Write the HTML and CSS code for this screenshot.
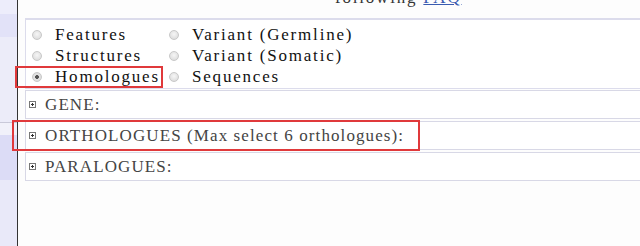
FILE: index.html
```html
<!DOCTYPE html>
<html lang="en">
<head>
    <meta charset="UTF-8">
    <title>Homologues</title>
    <link rel="stylesheet" href="styles.css">
</head>
<body>
    <div class="side"></div>

    <div class="main">
        <!-- top line, mostly scrolled out of view -->
        <div class="intro">
            <p>following <a href="#">FAQ</a></p>
        </div>

        <!-- data type choice -->
        <div class="panel">
            <label class="choice"><input type="radio" name="kind"> Features</label>
            <label class="choice"><input type="radio" name="kind"> Variant (Germline)</label>
            <label class="choice"><input type="radio" name="kind"> Structures</label>
            <label class="choice"><input type="radio" name="kind"> Variant (Somatic)</label>
            <label class="choice marked"><input type="radio" name="kind" checked> Homologues</label>
            <label class="choice"><input type="radio" name="kind"> Sequences</label>
        </div>

        <div class="section">
            <span class="toggle"><svg width="7" height="7" viewBox="0 0 7 7"><rect x="0.5" y="0.5" width="6" height="6" fill="#fff" stroke="#777"/><path d="M2 3.5h3M3.5 2v3" stroke="#333"/></svg></span>
            GENE:
        </div>
        <div class="section marked">
            <span class="toggle"><svg width="7" height="7" viewBox="0 0 7 7"><rect x="0.5" y="0.5" width="6" height="6" fill="#fff" stroke="#777"/><path d="M2 3.5h3M3.5 2v3" stroke="#333"/></svg></span>
            ORTHOLOGUES (Max select 6 orthologues):
        </div>
        <div class="section">
            <span class="toggle"><svg width="7" height="7" viewBox="0 0 7 7"><rect x="0.5" y="0.5" width="6" height="6" fill="#fff" stroke="#777"/><path d="M2 3.5h3M3.5 2v3" stroke="#333"/></svg></span>
            PARALOGUES:
        </div>
    </div>
</body>
</html>
```

FILE: styles.css
```css
body {
    margin: 0;
    height: 246px;
    overflow: hidden;
    display: flex;
    background-color: #fdfdfd;
    font-family: 'Liberation Serif', serif;
}
.side {
    width: 17px;
    flex-shrink: 0;
    background: linear-gradient(to bottom,
        #ededfb 0, #ededfb 14px,
        #e2e2f8 14px, #e2e2f8 37px,
        #ececf9 37px, #ececf9 122px,
        #c9c9d9 122px, #c9c9d9 123px,
        #f1f1fa 123px, #f1f1fa 135px,
        #dcdcf6 135px, #dcdcf6 180px,
        #e9e9f9 180px);
}
.main {
    flex: 1;
    border-left: 1px solid #333;
    padding-left: 7px;
}
.intro {
    height: 18px;
    overflow: hidden;
    padding-left: 310px;
}
.intro p {
    margin: -12px 0 0 0;
    font-size: 17px;
    line-height: 20px;
    letter-spacing: 1.8px;
    color: #333;
}
.intro a {
    color: #3a5cb0;
}

/* Estilo del panel de opciones */
.panel {
    display: grid;
    grid-template-columns: 137px auto;
    grid-auto-rows: 21px;
    padding: 4px 0 1px 6px;
    border: 1px solid #dcdcec;
    border-right: none;
    border-top-width: 2px;
    background-color: #fff;
}
.choice {
    position: relative;
    display: flex;
    align-items: center;
    gap: 13px;
    font-size: 17px;
    letter-spacing: 1.8px;
    color: #111;
    white-space: nowrap;
}
.choice input {
    appearance: none;
    margin: 0;
    width: 10px;
    height: 10px;
    border: 1px solid #c8c8c8;
    border-radius: 50%;
    background: radial-gradient(circle at 50% 40%, #f6f6f6, #d6d6d6);
    flex-shrink: 0;
}
.choice input:checked {
    background: radial-gradient(circle, #555 0, #555 1.6px, #e4e4e4 2.2px, #d6d6d6);
}

/* Recuadro rojo de anotacion */
.marked::after {
    content: "";
    position: absolute;
    border: 2px solid #e0393b;
    pointer-events: none;
}
.choice.marked::after {
    left: -17px;
    top: 0;
    width: 144px;
    height: 18px;
}

.section {
    position: relative;
    display: flex;
    align-items: center;
    gap: 9px;
    height: 27px;
    margin-top: 1px;
    padding-left: 3px;
    border: 1px solid #d8d8e6;
    border-right: none;
    background-color: #fff;
    font-size: 17px;
    letter-spacing: 1.1px;
    color: #444;
    white-space: nowrap;
}
.section + .section {
    margin-top: 2px;
}
.section.marked::after {
    left: -14px;
    top: -2px;
    width: 404px;
    height: 27px;
}
.toggle {
    display: flex;
}
```
